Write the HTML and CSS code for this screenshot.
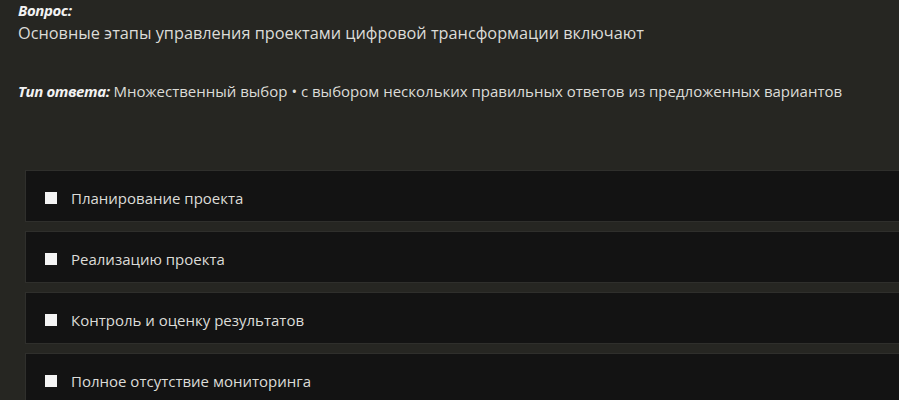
FILE: index.html
```html
<!DOCTYPE html>
<html lang="ru">
<head>
    <meta charset="UTF-8">
    <title>Вопрос</title>
    <link rel="stylesheet" href="styles.css">
</head>
<body>

<div class="question">
    <div class="label">Вопрос:</div>
    <div class="question-text">Основные этапы управления проектами цифровой трансформации включают</div>
    <div class="answer-type"><span class="label">Тип ответа:</span> Множественный выбор • с выбором нескольких правильных ответов из предложенных вариантов</div>
</div>

<div class="options">
    <label class="option"><span class="box"></span>Планирование проекта</label>
    <label class="option"><span class="box"></span>Реализацию проекта</label>
    <label class="option"><span class="box"></span>Контроль и оценку результатов</label>
    <label class="option"><span class="box"></span>Полное отсутствие мониторинга</label>
</div>

</body>
</html>
```

FILE: styles.css
```css
body {
    margin: 0;
    background-color: #262622;
    color: #dcdcd8;
    font-family: 'Open Sans', 'Noto Sans', sans-serif;
    font-size: 15px;
    overflow: hidden;
}

.question {
    padding: 0 18px;
}

.label {
    font-weight: bold;
    font-style: italic;
    color: #f2f2f2;
    letter-spacing: -0.4px;
}

.question-text {
    margin-top: 2px;
    font-size: 16.3px;
    line-height: 22px;
}

.answer-type {
    margin-top: 37px;
    line-height: 20px;
}

.options {
    margin-top: 69px;
    padding-left: 25px;
    display: flex;
    flex-direction: column;
    gap: 9px;
}

.option {
    display: flex;
    align-items: center;
    height: 52px;
    padding: 3px 0 0 19px;
    background-color: #131313;
    border: 1px solid #2f2f2c;
    border-right: none;
    box-sizing: border-box;
}

.box {
    width: 12px;
    height: 12px;
    background-color: #f4f4f4;
    margin-right: 14px;
}
```
